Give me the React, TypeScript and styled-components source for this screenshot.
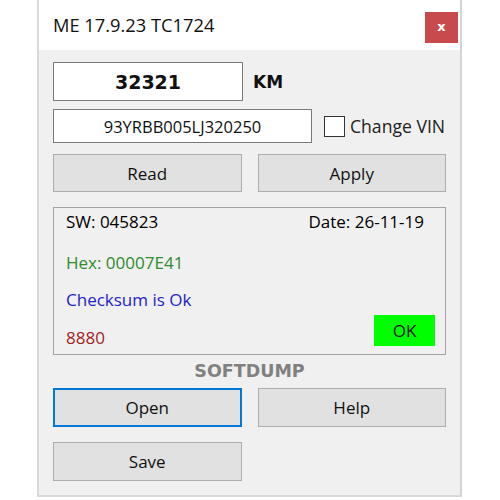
import React from "react";
import styled, { createGlobalStyle } from "styled-components";

const GlobalStyle = createGlobalStyle`
  html, body { margin: 0; padding: 0; background: #ffffff; }
  * { box-sizing: border-box; }
`;

const uiFont = `"Open Sans", "Noto Sans", sans-serif`;
const boldFont = `"DejaVu Sans", "Liberation Sans", sans-serif`;

const Window = styled.div`
  margin-left: 37px;
  width: 425px;
  height: 497px;
  background: #f0f0f0;
  border-left: 2px solid #d9d9d9;
  border-right: 2px solid #d4d4d4;
  border-bottom: 2px solid #d9d9d9;
  display: flex;
  flex-direction: column;
  font-family: ${uiFont};
  font-size: 17px;
  color: #000;
`;

const TitleBar = styled.div`
  height: 50px;
  background: #ffffff;
  display: flex;
  justify-content: space-between;
  align-items: flex-start;
  padding: 0 2px 0 14px;
`;

const Title = styled.span`
  font-size: 18.3px;
  line-height: 50px;
  color: #111;
`;

const CloseButton = styled.div`
  margin-top: 12px;
  width: 33px;
  height: 31px;
  background: #c94a4d;
  color: #fff;
  font-family: ${boldFont};
  font-weight: bold;
  font-size: 13px;
  display: flex;
  align-items: center;
  justify-content: center;
  padding-bottom: 2px;
`;

const Body = styled.div`
  padding: 12px 14px 14px 14px;
  display: flex;
  flex-direction: column;
`;

const Row = styled.div<{ $top?: number }>`
  display: flex;
  align-items: center;
  margin-top: ${(p) => p.$top ?? 0}px;
`;

const TextBox = styled.div<{ $w: number; $h: number; $bold?: boolean }>`
  width: ${(p) => p.$w}px;
  height: ${(p) => p.$h}px;
  background: #ffffff;
  border: 1px solid #7a7a7a;
  display: flex;
  align-items: center;
  justify-content: center;
  font-family: ${(p) => (p.$bold ? boldFont : uiFont)};
  font-weight: ${(p) => (p.$bold ? "bold" : "normal")};
  font-size: ${(p) => (p.$bold ? "19px" : "16.5px")};
  color: #111;
`;

const KmLabel = styled.span`
  margin-left: 10px;
  font-family: ${boldFont};
  font-weight: bold;
  font-size: 17px;
  color: #111;
`;

const CheckBox = styled.div`
  margin-left: 12px;
  width: 21px;
  height: 21px;
  background: #fff;
  border: 1px solid #333;
`;

const CheckLabel = styled.span`
  margin-left: 5px;
  font-size: 17.6px;
  color: #222;
`;

const ButtonGrid = styled.div<{ $top?: number }>`
  display: grid;
  grid-template-columns: 1fr 1fr;
  column-gap: 16px;
  margin-top: ${(p) => p.$top ?? 0}px;
`;

const Button = styled.div<{ $focused?: boolean; $h?: number }>`
  height: ${(p) => p.$h ?? 39}px;
  background: #e1e1e1;
  border: ${(p) => (p.$focused ? "2px solid #0078d7" : "1px solid #adadad")};
  display: flex;
  align-items: center;
  justify-content: center;
  color: #111;
`;

const Panel = styled.div`
  margin-top: 15px;
  height: 148px;
  border: 1px solid #a3a3a3;
  display: flex;
  flex-direction: column;
  padding: 2px 10px 0 12px;
`;

const Line = styled.div<{ $top?: number; $color?: string; $right?: number }>`
  display: flex;
  justify-content: space-between;
  line-height: 24px;
  height: 24px;
  margin-top: ${(p) => p.$top ?? 0}px;
  padding-right: ${(p) => p.$right ?? 0}px;
  color: ${(p) => p.$color ?? "#000"};
`;

const LastLine = styled.div`
  display: flex;
  justify-content: space-between;
  height: 35px;
  margin-top: 3px;
`;

const Code = styled.span`
  align-self: flex-end;
  line-height: 24px;
  color: #a02424;
`;

const OkBox = styled.div`
  width: 61px;
  height: 31px;
  background: #00ff00;
  display: flex;
  align-items: center;
  justify-content: center;
  color: #111;
`;

const Brand = styled.div`
  height: 33px;
  display: flex;
  align-items: center;
  justify-content: center;
  font-family: ${boldFont};
  font-weight: bold;
  font-size: 17.5px;
  color: #808080;
  padding-bottom: 2px;
`;

export default function App() {
  return (
    <>
      <GlobalStyle />
      <Window>
        <TitleBar>
          <Title>ME 17.9.23 TC1724</Title>
          <CloseButton>x</CloseButton>
        </TitleBar>
        <Body>
          <Row>
            <TextBox $w={190} $h={39} $bold>
              32321
            </TextBox>
            <KmLabel>KM</KmLabel>
          </Row>
          <Row $top={8}>
            <TextBox $w={259} $h={34}>
              93YRBB005LJ320250
            </TextBox>
            <CheckBox />
            <CheckLabel>Change VIN</CheckLabel>
          </Row>
          <ButtonGrid $top={11}>
            <Button $h={38}>Read</Button>
            <Button $h={38}>Apply</Button>
          </ButtonGrid>
          <Panel>
            <Line $right={11}>
              <span>SW: 045823</span>
              <span>Date: 26-11-19</span>
            </Line>
            <Line $top={17} $color="#2e8b2e">
              <span>Hex: 00007E41</span>
            </Line>
            <Line $top={13} $color="#2222c8">
              <span>Checksum is Ok</span>
            </Line>
            <LastLine>
              <Code>8880</Code>
              <OkBox>OK</OkBox>
            </LastLine>
          </Panel>
          <Brand>SOFTDUMP</Brand>
          <ButtonGrid>
            <Button $focused>Open</Button>
            <Button>Help</Button>
          </ButtonGrid>
          <ButtonGrid $top={15}>
            <Button>Save</Button>
          </ButtonGrid>
        </Body>
      </Window>
    </>
  );
}
